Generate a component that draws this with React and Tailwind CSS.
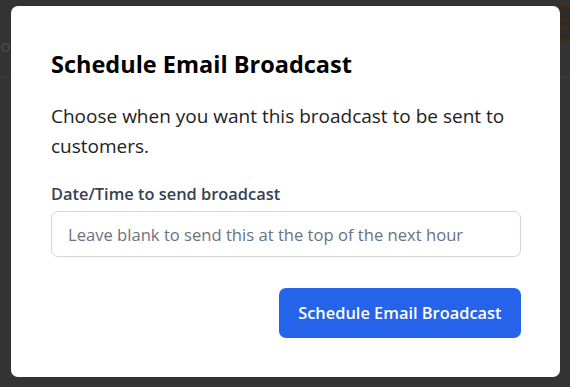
export default function App() {
  const font = { fontFamily: '"Open Sans", "Noto Sans", sans-serif' };
  return (
    <div className="relative w-[570px] h-[387px] overflow-hidden bg-[#333333]" style={font}>
      {/* dimmed page behind */}
      <div className="absolute inset-0">
        <div className="flex h-[77px] border-b border-[#3c3c3c]">
          <div className="pt-[33px] pl-0 text-[17px] text-[#4d4d4d] -ml-[8px]">co</div>
        </div>
        <div className="absolute right-[-40px] top-[5px] w-[52px] h-[36px] border-y-2 border-[#4b2a0e] bg-[#2f2b28] text-[#4b2a0e] text-[18px] font-semibold pl-[1px] leading-[30px]">
          c
        </div>
      </div>

      {/* modal */}
      <div className="absolute left-[11px] top-[6px] w-[549px] h-[371px] rounded-[7px] bg-white pl-[40px] pr-[39px] pt-[42px]">
        <h2 className="text-[23.5px] leading-[32px] font-bold text-[#000000]">Schedule Email Broadcast</h2>
        <p className="mt-[22px] text-[19px] leading-[29.5px] text-[#222222]">
          Choose when you want this broadcast to be sent to customers.
        </p>
        <label className="mt-[21px] block text-[16.4px] leading-[24px] font-semibold text-[#374151]">
          Date/Time to send broadcast
        </label>
        <input
          className="mt-[5px] block w-full h-[46px] rounded-[7px] border border-[#d1d5db] px-[16px] text-[16.6px] text-[#111827] placeholder:text-[#6b7280] outline-none"
          placeholder="Leave blank to send this at the top of the next hour"
        />
        <div className="mt-[31px] flex justify-end">
          <button className="h-[50px] px-[19.5px] rounded-[7px] bg-[#2563eb] text-white text-[16.4px] font-semibold">
            Schedule Email Broadcast
          </button>
        </div>
      </div>
    </div>
  );
}
